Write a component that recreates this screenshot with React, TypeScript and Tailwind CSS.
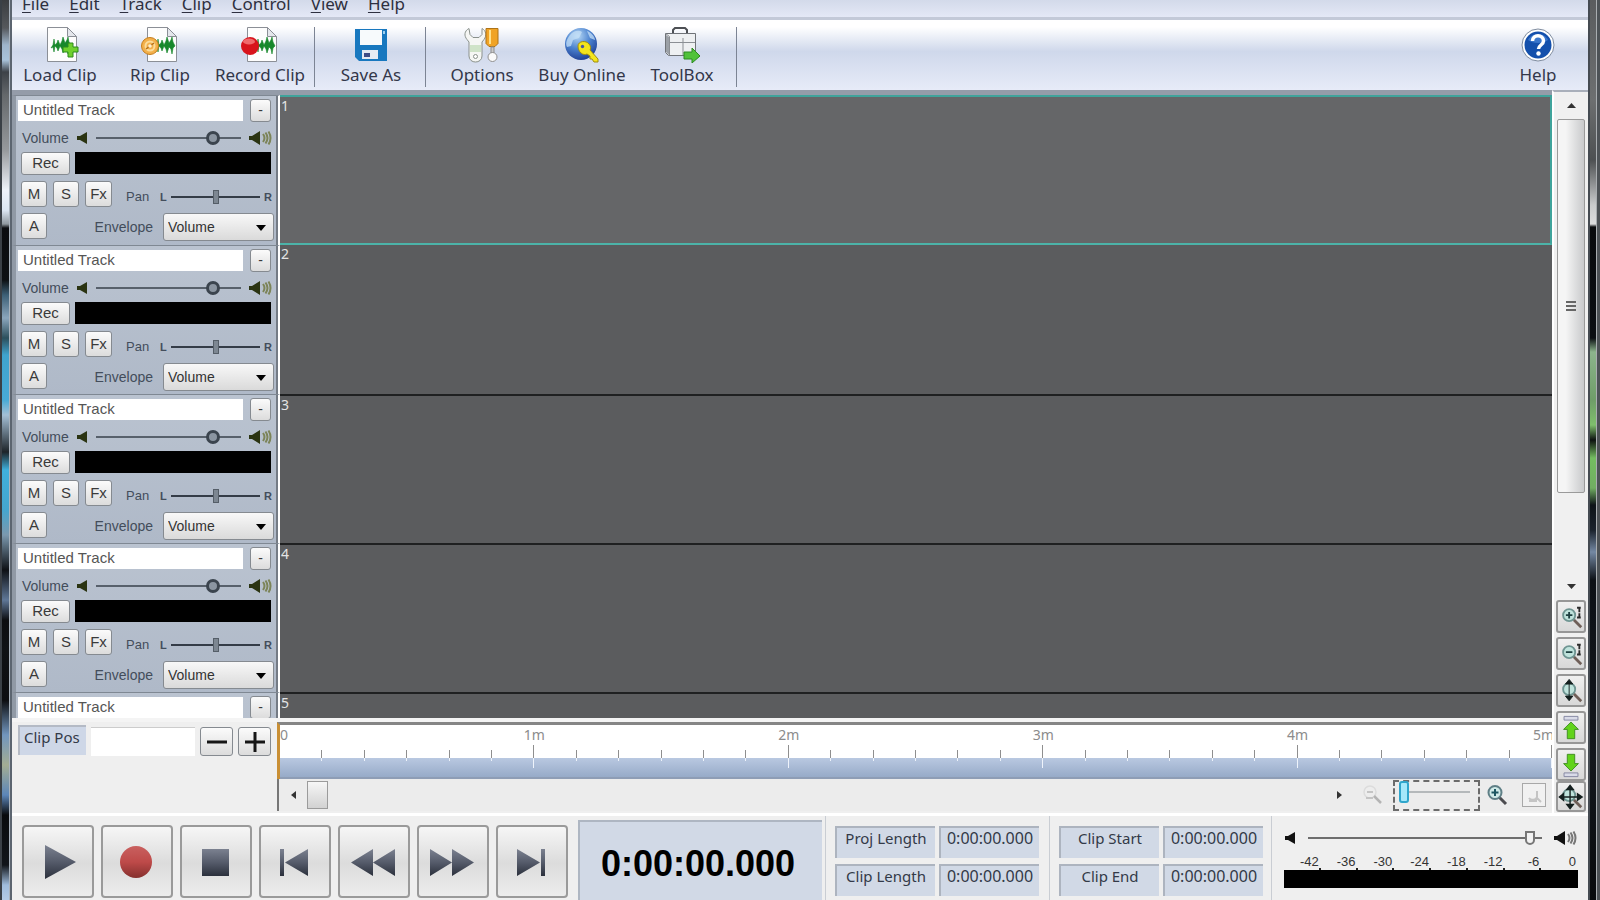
import React from 'react';

const UI = "font-['Noto_Sans','Open_Sans',sans-serif]";
const ARIAL = "font-['Liberation_Sans',Arial,sans-serif]";

/* ---------- toolbar icons ---------- */

function Sheet({ children }: { children: React.ReactNode }) {
  return (
    <svg width="38" height="36" viewBox="0 0 38 36" aria-hidden="true">
      <path d="M6.5.5h20l9 9v25h-29z" fill="#fdfdfd" stroke="#8b8f96" />
      <path d="M26.5.5v9h9z" fill="#e4e7ec" stroke="#8b8f96" />
      {children}
    </svg>
  );
}

const Wave = ({ x }: { x: number }) => (
  <path
    transform={`translate(${x} 21)`}
    d="M0 0l2-3 1-6 1 6 2-2 1-3 2 5 2-4 1-4 2 6 2-3 1-3 1 5 2 4-2 2-1 6-1-5-2-2-2 6-1-4-2-3-2 5-1-3-2-2-1 6-1-5z"
    fill="#17882b"
    stroke="#17882b"
    strokeWidth=".6"
  />
);

const LoadIcon = () => (
  <Sheet>
    <Wave x={10} />
    <path d="M27 16h5v4h5v5h-5v5h-5v-5h-5v-5h5z" fill="#6fd02e" stroke="#2d8a1c" />
  </Sheet>
);

const RipIcon = () => (
  <Sheet>
    <Wave x={14} />
    <circle cx="9" cy="19" r="8.500" fill="#f3b04a" stroke="#c67d1c" />
    <circle cx="9" cy="19" r="4.500" fill="none" stroke="#fbdc9b" strokeWidth="2" />
    <path d="M5 22l8-6" stroke="#b5701b" strokeWidth="1.500" />
    <circle cx="9" cy="19" r="1.800" fill="#fff0cf" />
  </Sheet>
);

const RecordIcon = () => (
  <Sheet>
    <Wave x={14} />
    <circle cx="9" cy="19" r="9" fill="#d8141c" />
    <ellipse cx="8" cy="14.500" rx="6" ry="3" fill="#f06a6c" />
  </Sheet>
);

const SaveIcon = () => (
  <svg width="34" height="34" viewBox="0 0 34 34" aria-hidden="true">
    <path d="M1 1h32v32H5l-4-4z" fill="#1878bf" />
    <path d="M6 2h22v15H6z" fill="#f7fafc" />
    <path d="M8 22h16v9H8z" fill="#e4ebf3" />
    <path d="M10 25h6v4h-6z" fill="#3f4d86" />
    <path d="M29 3h2v3h-2z" fill="#9fd0f0" />
  </svg>
);

const OptionsIcon = () => (
  <svg width="36" height="36" viewBox="0 0 36 36" aria-hidden="true">
    <path
      d="M5 1.500C0 4 0 9 3 12.500l2 2.500v14c0 8 13 8 13 0V15l2-2.500c3-4 2-9-2-11v6l-3 3h-6l-3-3z"
      fill="#f5f6f4"
      stroke="#8a918c"
    />
    <path d="M6 18h11v7H6z" fill="#cfe3c8" />
    <circle cx="11.500" cy="29.500" r="2" fill="#fff" stroke="#8a918c" />
    <path d="M22 1.500h12v15l-3 3h-6l-3-3z" fill="#f0a325" stroke="#ad7318" />
    <path d="M25 3h2v14h-2z" fill="#ffe08a" />
    <path d="M27 20h3v6h-3z" fill="#c9c9c9" stroke="#8f8f8f" />
    <circle cx="28.500" cy="30" r="4.500" fill="#fafafa" stroke="#8f8f8f" />
  </svg>
);

const BuyIcon = () => (
  <svg width="36" height="36" viewBox="0 0 36 36" aria-hidden="true">
    <defs>
      <radialGradient id="globe" cx="0.4" cy="0.25" r="0.8">
        <stop offset="0" stopColor="#b5d7f4" />
        <stop offset="0.5" stopColor="#4b82cf" />
        <stop offset="1" stopColor="#1c3b91" />
      </radialGradient>
    </defs>
    <circle cx="17" cy="17" r="16" fill="url(#globe)" />
    <path d="M6 8c4-5 9-5 12-3l-3 6-6 2-2 6-4 1c-2-4 0-8 3-12zM23 4c4 1 8 6 8 9l-5-2z" fill="#c6e0f7" opacity=".75" />
    <path
      d="M14 19c0-5 8-6 11-2 2 2 2 5 1 6l8 9v3h-4l-2-3h-2v-3l-3-2c-4 2-9-2-9-8z"
      fill="#f4e51c"
      stroke="#a08d10"
    />
    <circle cx="18.500" cy="19.500" r="1.700" fill="#4a56a0" />
  </svg>
);

const ToolBoxIcon = () => (
  <svg width="36" height="36" viewBox="0 0 36 36" aria-hidden="true">
    <path d="M9 6V3l2-2h10l2 2v3" fill="none" stroke="#4d5054" strokeWidth="2" />
    <path d="M1.500 6.500h30v22h-27l-3-3z" fill="#eef0f2" stroke="#6f7378" />
    <path d="M1.500 6.500l4 3v19M5 15.500h26M19 11v17" fill="none" stroke="#8b8f94" />
    <path d="M2 8l3 2v18l-3-3z" fill="#9ba0a6" />
    <path d="M20 25h8v-4l8 8-8 7v-4h-8z" fill="#51c23a" stroke="#2c8a20" />
  </svg>
);

const HelpIcon = () => (
  <svg width="34" height="34" viewBox="0 0 34 34" aria-hidden="true">
    <circle cx="17" cy="17" r="16" fill="#fff" stroke="#7f8c9f" />
    <circle cx="17" cy="17" r="13.500" fill="#1450ac" />
    <path d="M7 12c4-8 16-8 20 0-5 4-15 4-20 0z" fill="#4a86d8" opacity=".7" />
    <path d="M11.500 13c0-7 11-7 11 0 0 4-5 4-5 8" fill="none" stroke="#fff" strokeWidth="3.500" />
    <circle cx="17.500" cy="25.500" r="2.200" fill="#fff" />
  </svg>
);

/* ---------- small glyphs ---------- */

const SpeakerLow = ({ color }: { color: string }) => (
  <svg width="12" height="12" viewBox="0 0 12 12" aria-hidden="true" className="shrink-0">
    <path d="M1 4h3l7-4v12l-7-4H1z" fill={color} />
  </svg>
);

const SpeakerHigh = ({ color, wave }: { color: string; wave: string }) => (
  <svg width="24" height="16" viewBox="0 0 24 16" aria-hidden="true" className="shrink-0">
    <path d="M0 6h3l8-5v14l-8-5H0z" fill={color} />
    <path d="M14 4q3 4 0 8M16.500 2.500q4 5.500 0 11M19.500 1.500q4 6.500 0 13" fill="none" stroke={wave} strokeWidth="2" />
  </svg>
);

type LensKind = 'in' | 'out' | 'height' | 'all';

const Lens = ({ kind }: { kind: LensKind }) => (
  <svg width="28" height="28" viewBox="0 0 28 28" aria-hidden="true">
    <path d="M17 17l8 8" stroke="#6f5f58" strokeWidth="3" />
    <circle cx="12" cy="12" r="6.500" fill="#bfe3dc" stroke="#6f9592" strokeWidth="2" />
    {kind === 'in' && <path d="M8.500 12h7M12 8.500v7" stroke="#1d3f40" strokeWidth="2" />}
    {kind === 'out' && <path d="M8.500 12h7" stroke="#1d3f40" strokeWidth="2" />}
    {(kind === 'in' || kind === 'out') && (
      <path d="M23 5v9M20.500 4h5M20.500 14.500h5" stroke="#2b2b2b" strokeWidth="2" fill="none" strokeDasharray="4 1" />
    )}
    {kind === 'height' && <path d="M12 6v14M8 6.500h8l-4-5zM8 19.500h8l-4 5z" stroke="#15201f" fill="#15201f" />}
    {kind === 'all' && (
      <path
        d="M13 5v18M5 14h17M9.500 6h7L13 1.500zM9.500 22h7L13 26.500zM6 10.500v7L1.500 14zM21 10.500v7l5-3.500z"
        stroke="#15201f"
        strokeWidth="1.500"
        fill="#15201f"
      />
    )}
  </svg>
);

const GreenArrow = ({ down }: { down?: boolean }) => (
  <svg width="28" height="30" viewBox="0 0 28 30" aria-hidden="true">
    <g transform={down ? 'matrix(1 0 0 -1 0 30)' : undefined}>
      <path d="M6.500 2.500h15v4h-15z" fill="#d9dbe8" stroke="#8284a0" />
      <path d="M14 8.500l8 8h-4v10h-8v-10H6z" fill="#62d31b" stroke="#3f8a22" />
    </g>
  </svg>
);

/* ---------- track list ---------- */

const BTN =
  'flex shrink-0 items-center justify-center rounded-[3px] border border-[#858a90] bg-linear-to-b from-[#fbfbfb] to-[#dcdcdc] text-[#3a3a3a]';

const RANGE = 'm-0 appearance-none bg-transparent [&::-webkit-slider-thumb]:appearance-none';

function Track({ index, selected }: { index: number; selected: boolean }) {
  const id = `track-${index}`;
  return (
    <section className={`flex shrink-0 ${selected ? 'h-[150px]' : 'h-[149px]'}`} aria-label={`Track ${index}`}>
      <div
        className={`flex w-[268px] shrink-0 flex-col border-t border-r-2 border-l-4 border-t-[#7f8893] border-r-white border-l-[#9099a5] bg-linear-to-b from-[#bac3d0] to-[#afb9c8] ${ARIAL}`}
      >
        <div className="flex h-7 items-center gap-[7px] border-r-2 border-[#747b85] pr-[5px] pl-0.5">
          <input
            type="text"
            aria-label={`Track ${index} name`}
            defaultValue="Untitled Track"
            className="h-[21px] min-w-0 flex-1 bg-white px-[5px] text-[15px] text-[#555]"
          />
          <button type="button" aria-label="Collapse track" className={`${BTN} h-[23px] w-[21px] text-[14px]`}>
            -
          </button>
        </div>
        <div className="flex h-7 items-center border-r-2 border-[#747b85] pr-[3px] pl-1.5 text-[14px] text-[#434d5b]">
          <label htmlFor={`${id}-vol`} className="w-[54px]">
            Volume
          </label>
          <SpeakerLow color="#2b3412" />
          <input
            id={`${id}-vol`}
            type="range"
            defaultValue={84}
            className={`${RANGE} mx-2 h-4 min-w-0 flex-1 [&::-webkit-slider-runnable-track]:h-0.5 [&::-webkit-slider-runnable-track]:bg-[#57606b] [&::-webkit-slider-thumb]:-mt-1.5 [&::-webkit-slider-thumb]:size-3.5 [&::-webkit-slider-thumb]:rounded-full [&::-webkit-slider-thumb]:border-[3px] [&::-webkit-slider-thumb]:border-[#3b444e] [&::-webkit-slider-thumb]:bg-[#8b95a1]`}
          />
          <SpeakerHigh color="#2b3412" wave="#7c8458" />
        </div>
        <div className="flex h-[23px] gap-[5px] border-r-2 border-[#747b85] pr-[5px] pl-[5px]">
          <button type="button" className={`${BTN} w-[49px] text-[15px]`}>
            Rec
          </button>
          <div className="h-[22px] flex-1 bg-black" />
        </div>
        <div className="flex h-8 items-end gap-1.5 border-r-2 border-[#747b85] pl-[5px]">
          <button type="button" className={`${BTN} h-[26px] w-[26px] text-[15px]`}>
            M
          </button>
          <button type="button" className={`${BTN} h-[26px] w-[26px] text-[15px]`}>
            S
          </button>
          <button type="button" className={`${BTN} h-[26px] w-[27px] text-[15px]`}>
            Fx
          </button>
          <label htmlFor={`${id}-pan`} className="ml-2 w-[28px] pb-0.5 text-[13px] leading-4 text-[#434d5b]">
            Pan
          </label>
          <div className="flex h-[18px] min-w-0 flex-1 items-center gap-1 pr-1 pb-0.5 text-[11px] font-bold text-[#434d5b]">
            <span>L</span>
            <input
              id={`${id}-pan`}
              type="range"
              defaultValue={51}
              className={`${RANGE} h-4 min-w-0 flex-1 [&::-webkit-slider-runnable-track]:h-0.5 [&::-webkit-slider-runnable-track]:bg-[#343c47] [&::-webkit-slider-thumb]:-mt-1.5 [&::-webkit-slider-thumb]:h-3.5 [&::-webkit-slider-thumb]:w-1.5 [&::-webkit-slider-thumb]:border [&::-webkit-slider-thumb]:border-[#555e68] [&::-webkit-slider-thumb]:bg-[#7d8792]`}
            />
            <span>R</span>
          </div>
        </div>
        <div className="flex flex-1 items-start border-r-2 border-[#747b85] pt-1.5 pr-0.5 pl-[5px]">
          <button type="button" className={`${BTN} h-[26px] w-[26px] text-[15px]`}>
            A
          </button>
          <label
            htmlFor={`${id}-env`}
            className="flex h-7 flex-1 items-center justify-end pr-2.5 text-[14px] text-[#434d5b]"
          >
            Envelope
          </label>
          <div className="relative w-[111px]">
            <select
              id={`${id}-env`}
              className="h-7 w-full appearance-none rounded-[3px] border border-[#858a90] bg-linear-to-b from-[#f8f8f8] to-[#dadada] pl-1 text-[14px] text-[#333]"
            >
              <option>Volume</option>
              <option>Pan</option>
            </select>
            <svg
              width="10"
              height="6"
              viewBox="0 0 10 6"
              aria-hidden="true"
              className="pointer-events-none absolute top-3 right-2"
            >
              <path d="M0 0h10L5 6z" fill="#000" />
            </svg>
          </div>
        </div>
      </div>
      <div
        className={`min-w-0 flex-1 pl-px text-[14px] leading-[18px] text-[#e4e4e4] ${UI} ${
          selected
            ? 'border-y-2 border-r-2 border-t-[#3fa39b] border-r-[#3fa39b] border-b-[#4cb3a9] bg-[#656668]'
            : index === 2
              ? 'bg-[#5b5c5e]'
              : 'border-t-2 border-[#1f2021] bg-[#5b5c5e]'
        }`}
      >
        {index}
      </div>
    </section>
  );
}

/* ---------- time ruler ---------- */

function Ruler() {
  return (
    <div className="relative flex h-[57px] overflow-hidden border-t-[3px] border-l-[3px] border-t-[#858585] border-l-[#c98f35] bg-white">
      <div className="absolute inset-x-0 bottom-0 h-[21px] border-b-2 border-[#8e9db5] bg-linear-to-b from-[#b9c8e1] to-[#97abc8]" />
      <span className={`absolute top-0 left-0 text-[14px] leading-5 text-[#8c8c8c] ${UI}`}>0</span>
      {[1, 2, 3, 4, 5].map((m) => (
        <div key={m} className="relative flex flex-1">
          {[1, 2, 3, 4, 5, 6].map((t) => (
            <div key={t} className="flex flex-1 flex-col items-end">
              <div className={`w-px bg-[#8f8f8f] ${t === 6 ? 'mt-5 h-[13px]' : 'mt-[25px] h-2'}`} />
              <div className={`relative w-px bg-[#eef3fb] ${t === 6 ? 'h-2.5' : 'h-[3px]'}`} />
            </div>
          ))}
          <span
            className={`absolute top-0 text-[14px] leading-5 text-[#8c8c8c] ${UI} ${
              m === 5 ? '-right-0.5' : 'right-0 translate-x-1/2'
            }`}
          >
            {m}m
          </span>
        </div>
      ))}
    </div>
  );
}

function HorizontalScroll() {
  return (
    <div className="flex h-8 items-center border-l-2 border-[#777] bg-[#ececec] pr-1.5">
      <button type="button" aria-label="Scroll left" className="flex w-7 justify-center">
        <svg width="5" height="8" viewBox="0 0 5 8" aria-hidden="true">
          <path d="M5 0v8L0 4z" fill="#333" />
        </svg>
      </button>
      <div className="h-7 w-[21px] border border-[#9b9b9b] bg-linear-to-b from-[#f6f6f6] to-[#d2d2d2]" />
      <div className="flex-1" />
      <button type="button" aria-label="Scroll right" className="flex w-5 justify-center">
        <svg width="5" height="8" viewBox="0 0 5 8" aria-hidden="true">
          <path d="M0 0v8l5-4z" fill="#333" />
        </svg>
      </button>
      <button type="button" aria-label="Zoom out" className="ml-3">
        <svg width="22" height="22" viewBox="0 0 22 22" aria-hidden="true">
          <circle cx="9" cy="8" r="6" fill="#ededed" stroke="#dcdcdc" strokeWidth="1.500" />
          <path d="M6 8h6M5 14h7" stroke="#c4c4c4" strokeWidth="2" />
          <path d="M13 12l7 7" stroke="#b4b4b4" strokeWidth="2.500" />
        </svg>
      </button>
      <div className="ml-2.5 flex h-[31px] w-[87px] items-start border-2 border-dashed border-[#6b6b6b] pr-2 pl-1">
        <input
          type="range"
          aria-label="Zoom"
          defaultValue={0}
          className={`${RANGE} h-5 w-full [&::-webkit-slider-runnable-track]:h-0.5 [&::-webkit-slider-runnable-track]:bg-[#b5b9bb] [&::-webkit-slider-thumb]:-mt-2.5 [&::-webkit-slider-thumb]:h-[22px] [&::-webkit-slider-thumb]:w-2.5 [&::-webkit-slider-thumb]:rounded-[3px] [&::-webkit-slider-thumb]:border-2 [&::-webkit-slider-thumb]:border-[#2fa5cb] [&::-webkit-slider-thumb]:bg-[#a5e8fa]`}
        />
      </div>
      <button type="button" aria-label="Zoom in" className="ml-1.5">
        <svg width="22" height="22" viewBox="0 0 22 22" aria-hidden="true">
          <path d="M13 13l7 7" stroke="#4c4c50" strokeWidth="3" />
          <circle cx="9" cy="8.500" r="6.500" fill="#cfeae8" stroke="#5f7f86" strokeWidth="2" />
          <path d="M5.500 8.500h7M9 5v7" stroke="#1c5661" strokeWidth="2" />
        </svg>
      </button>
      <button
        type="button"
        aria-label="Zoom to selection"
        className="ml-3.5 flex size-6 items-center justify-center border border-[#a8a8a8] bg-[#f1f1f1]"
      >
        <svg width="16" height="16" viewBox="0 0 16 16" aria-hidden="true">
          <path d="M3 11c2 3 7 2 8-1V4M11 11l4 4M3 14h8" fill="none" stroke="#c4c4c4" strokeWidth="2" />
        </svg>
      </button>
    </div>
  );
}

/* ---------- transport ---------- */

const TRANSPORT: [string, React.ReactNode][] = [
  ['Play', <path d="M8 4l31 17L8 38z" fill="url(#steel)" />],
  ['Record', <circle cx="20" cy="21" r="16" fill="url(#red)" />],
  ['Stop', <path d="M7 8h27v27H7z" fill="url(#steel)" />],
  ['Go to start', <path d="M6 8h4v27H6zM11 21.500L34 8v27z" fill="url(#steel)" />],
  ['Rewind', <path d="M-2 21.500L20 8v27zM20 21.500L42 8v27z" fill="url(#steel)" />],
  ['Fast forward', <path d="M42 21.500L20 8v27zM20 21.500L-2 8v27z" fill="url(#steel)" />],
  ['Go to end', <path d="M30 8h4v27h-4zM29 21.500L6 8v27z" fill="url(#steel)" />],
];

const INFO_BOX =
  'flex h-8 w-[100px] items-start justify-center border-t-2 border-l-2 border-[#adb4bf] bg-[#d1d9e6] leading-5 text-[#333a48]';

function Info({ rows }: { rows: string[] }) {
  return (
    <div className="flex flex-col gap-1.5 border-l border-[#c9cdd3] pt-2.5 pl-[9px]">
      {rows.map((name) => (
        <div key={name} className="flex gap-1">
          <div className={`${INFO_BOX} text-[15px]`}>{name}</div>
          <output aria-label={name} className={`${INFO_BOX} text-[16px]`}>
            0:00:00.000
          </output>
        </div>
      ))}
    </div>
  );
}

function Transport() {
  return (
    <footer className={`flex h-[87px] shrink-0 border-t-[3px] border-white bg-[#efefef] ${UI}`}>
      <svg width="0" height="0" aria-hidden="true" className="absolute">
        <defs>
          <linearGradient id="steel" x1="0" y1="0" x2="0" y2="1">
            <stop offset="0" stopColor="#7b8190" />
            <stop offset="0.5" stopColor="#555b6a" />
            <stop offset="1" stopColor="#2b303c" />
          </linearGradient>
          <linearGradient id="red" x1="0" y1="0" x2="0" y2="1">
            <stop offset="0" stopColor="#c9605f" />
            <stop offset="0.5" stopColor="#be4a49" />
            <stop offset="1" stopColor="#85302e" />
          </linearGradient>
        </defs>
      </svg>
      <div className="flex gap-[7px] pt-[9px] pl-2.5">
        {TRANSPORT.map(([name, shape]) => (
          <button
            key={name}
            type="button"
            aria-label={name}
            className="flex h-[73px] w-[72px] items-center justify-center rounded-[4px] border-2 border-[#9a9a9a] bg-linear-to-b from-[#f6f6f6] from-0% via-[#dcdcdc] via-52% to-[#ececec] to-100%"
          >
            <svg width="42" height="42" viewBox="0 0 42 42" aria-hidden="true" className="overflow-visible">
              {shape}
            </svg>
          </button>
        ))}
      </div>
      <output
        aria-label="Position"
        className={`mt-1 ml-2.5 flex w-[244px] items-center justify-center border-t-2 border-l-2 border-[#aeb6c2] bg-[#d1d9e6] pt-1.5 pr-1.5 text-[36px] font-bold text-black ${ARIAL}`}
      >
        0:00:00.000
      </output>
      <div className="flex gap-2.5 pl-[3px]">
        <Info rows={['Proj Length', 'Clip Length']} />
        <Info rows={['Clip Start', 'Clip End']} />
      </div>
      <div className="ml-2 flex min-w-0 flex-1 flex-col border-l border-[#c9cdd3] pr-2.5 pl-3">
        <div className="flex h-10 items-center pt-1">
          <SpeakerLow color="#111" />
          <input
            type="range"
            aria-label="Master volume"
            defaultValue={97}
            className={`${RANGE} mr-3 ml-3 h-5 min-w-0 flex-1 [&::-webkit-slider-runnable-track]:h-0.5 [&::-webkit-slider-runnable-track]:bg-[#6e6e6e] [&::-webkit-slider-thumb]:-mt-1.5 [&::-webkit-slider-thumb]:h-3.5 [&::-webkit-slider-thumb]:w-2.5 [&::-webkit-slider-thumb]:rounded-b-[5px] [&::-webkit-slider-thumb]:border-2 [&::-webkit-slider-thumb]:border-[#777] [&::-webkit-slider-thumb]:bg-[#f3f3f3]`}
          />
          <SpeakerHigh color="#111" wave="#777" />
        </div>
        <div className={`flex h-3 text-[13px] leading-3 text-[#333] ${ARIAL}`}>
          {['-42', '-36', '-30', '-24', '-18', '-12', '-6', '0'].map((db) => (
            <span key={db} className="flex-1 pr-0.5 text-right">
              {db}
            </span>
          ))}
        </div>
        <div className="flex h-0.5">
          {[1, 2, 3, 4, 5, 6, 7, 8].map((n) => (
            <span key={n} className="flex-1 border-r-2 border-[#222] last:border-transparent" />
          ))}
        </div>
        <div className="h-[18px] bg-black" />
      </div>
    </footer>
  );
}

/* ---------- window ---------- */

const MENUS = ['File', 'Edit', 'Track', 'Clip', 'Control', 'View', 'Help'];

function Tool({ label, children }: { label: string; children: React.ReactNode }) {
  return (
    <button type="button" className="flex w-[100px] shrink-0 flex-col items-center">
      <span className="flex h-9 items-center">{children}</span>
      <span className="leading-6 whitespace-nowrap">{label}</span>
    </button>
  );
}

const Divider = () => <div className="mr-1.5 ml-1 h-[60px] w-px shrink-0 bg-[#7c8494]" />;

const SIDE =
  'flex w-[30px] shrink-0 items-center justify-center overflow-hidden rounded-[3px] border-2 border-[#979797] bg-linear-to-b from-[#f0f0f0] to-[#d8d8d8]';

export default function App() {
  return (
    <div className="flex h-screen w-full overflow-hidden bg-[#efefef]">
      <div className="flex w-3 shrink-0 border-r-2 border-l-2 border-r-[#5c6570] border-l-[#3a4046]">
        <div className="flex-1 bg-[linear-gradient(180deg,#3a3d40_0px,#55585c_28px,#9fb5cb_45px,#a9c3da_60px,#3d4248_72px,#64686b_95px,#96999c_150px,#eef3fa_190px,#dde8f4_210px,#8f989f_224px,#0a0c0f_228px,#0d1013_280px,#3c5f76_295px,#8ba6bd_318px,#2c4f5c_338px,#3fa3ce_355px,#48aad6_400px,#a4bfd6_415px,#1d2429_452px,#3fb0dc_470px,#45a6cf_510px,#7b98ae_535px,#0e1115_570px,#5f7797_600px,#0c0e11_620px,#0f1215_650px,#0c0d10_700px,#7296be_735px,#a3ad94_765px,#5c86b9_795px,#090b0d_815px,#11151a_865px,#9fbcdc_885px,#b4cbe5_900px)]" />
        <div className="w-px bg-[#aab4be]" />
      </div>

      <main className="flex min-w-0 flex-1 flex-col">
        <nav
          className={`flex h-5 shrink-0 gap-5 border-b-[3px] border-[#c3c9d8] bg-linear-to-b from-[#d3daea] to-[#e4e8f6] pl-2.5 text-[17px] text-[#2e3040] ${UI}`}
        >
          {MENUS.map((m) => (
            <a key={m} href="#" className="-mt-2 h-6 leading-6">
              <span className="underline underline-offset-2">{m[0]}</span>
              {m.slice(1)}
            </a>
          ))}
        </nav>

        <header
          className={`flex h-[70px] shrink-0 items-center bg-linear-to-b from-white from-10% via-[#cfd8eb] via-45% to-[#e7ebf8] to-100% pt-[3px] text-[17px] text-[#33374a] ${UI}`}
        >
          <div className="-ml-0.5 flex flex-1 items-center">
            <Tool label="Load Clip"><LoadIcon /></Tool>
            <Tool label="Rip Clip"><RipIcon /></Tool>
            <Tool label="Record Clip"><RecordIcon /></Tool>
            <Divider />
            <Tool label="Save As"><SaveIcon /></Tool>
            <Divider />
            <Tool label="Options"><OptionsIcon /></Tool>
            <Tool label="Buy Online"><BuyIcon /></Tool>
            <Tool label="ToolBox"><ToolBoxIcon /></Tool>
            <Divider />
          </div>
          <Tool label="Help"><HelpIcon /></Tool>
        </header>

        <div className="flex min-h-0 flex-1">
          <div className="flex min-w-0 flex-1 flex-col border-t-[5px] border-[#949ca9]">
            <div className="min-h-0 flex-1 overflow-hidden">
              {[1, 2, 3, 4, 5].map((n) => (
                <Track key={n} index={n} selected={n === 1} />
              ))}
            </div>
            <div className="flex shrink-0 border-t-4 border-[#f4f4f4] pb-0.5">
              <div className={`flex w-[265px] shrink-0 items-start pt-[3px] pl-1.5 text-[15px] text-[#333a48] ${UI}`}>
                <label
                  htmlFor="clip-pos"
                  className="h-[30px] w-[68px] border-t-2 border-l-2 border-[#b4bac5] bg-[#ced7e7] pl-1 leading-5"
                >
                  Clip Pos
                </label>
                <input
                  id="clip-pos"
                  type="text"
                  className="mt-0.5 ml-[5px] h-[29px] w-[104px] border-t border-[#ccc] bg-white"
                />
                <button type="button" aria-label="Decrease" className={`${BTN} mt-0.5 ml-[5px] h-[29px] w-[33px]`}>
                  <svg width="22" height="22" viewBox="0 0 22 22" aria-hidden="true">
                    <path d="M1 11h20" stroke="#161616" strokeWidth="3" />
                  </svg>
                </button>
                <button type="button" aria-label="Increase" className={`${BTN} mt-0.5 ml-[5px] h-[29px] w-[33px]`}>
                  <svg width="22" height="22" viewBox="0 0 22 22" aria-hidden="true">
                    <path d="M1 11h20M11 1v20" stroke="#161616" strokeWidth="3" />
                  </svg>
                </button>
              </div>
              <div className="min-w-0 flex-1">
                <Ruler />
                <HorizontalScroll />
              </div>
            </div>
          </div>

          <aside className="flex w-9 shrink-0 flex-col items-center gap-1 border-t-2 border-l-2 border-t-[#a9afba] border-l-white bg-[#f0f0f0] pb-px">
            <div className="flex min-h-0 w-[30px] flex-1 flex-col items-center">
              <button type="button" aria-label="Scroll up" className="flex h-[27px] w-full items-center justify-center">
                <svg width="9" height="5" viewBox="0 0 9 5" aria-hidden="true">
                  <path d="M0 5h9L4.500 0z" fill="#333" />
                </svg>
              </button>
              <div className="flex w-[28px] grow-[9] basis-0 flex-col items-center justify-center gap-0.5 rounded-[2px] border border-[#9a9a9a] bg-linear-to-r from-[#f5f5f5] from-30% to-[#c9cacc]">
                <span className="h-0.5 w-2.5 bg-[#666]" />
                <span className="h-0.5 w-2.5 bg-[#666]" />
                <span className="h-0.5 w-2.5 bg-[#666]" />
              </div>
              <div className="grow-[2] basis-0" />
              <button type="button" aria-label="Scroll down" className="flex h-5 w-full items-center justify-center">
                <svg width="9" height="5" viewBox="0 0 9 5" aria-hidden="true">
                  <path d="M0 0h9L4.500 5z" fill="#333" />
                </svg>
              </button>
            </div>
            <button type="button" aria-label="Zoom tracks in" className={`${SIDE} h-[33px]`}><Lens kind="in" /></button>
            <button type="button" aria-label="Zoom tracks out" className={`${SIDE} h-[33px]`}><Lens kind="out" /></button>
            <button type="button" aria-label="Fit track height" className={`${SIDE} h-[33px]`}><Lens kind="height" /></button>
            <button type="button" aria-label="Move track up" className={`${SIDE} h-[33px]`}><GreenArrow /></button>
            <button type="button" aria-label="Move track down" className={`${SIDE} h-[33px]`}><GreenArrow down /></button>
            <button type="button" aria-label="Zoom to fit all" className={`${SIDE} -mt-1 h-[31px]`}><Lens kind="all" /></button>
          </aside>
        </div>

        <Transport />
      </main>

      <div className="flex w-3 shrink-0 border-r-[3px] border-l-2 border-r-[#4d5256] border-l-[#454b52]">
        <div className="flex-1 bg-[linear-gradient(180deg,#5a5c5e_0px,#6d6f70_100px,#4d5052_160px,#c9cbcc_205px,#dcdddd_224px,#090b0d_227px,#0b0e12_338px,#8cb58c_352px,#6f9d68_400px,#7fbf6c_425px,#0d1210_440px,#74bd60_458px,#71ad62_488px,#0e1418_505px,#1a222c_530px,#7488a3_552px,#0d1116_580px,#14181d_760px,#080a0c_900px)]" />
        <div className="w-px bg-[#a9adb0]" />
      </div>
    </div>
  );
}
